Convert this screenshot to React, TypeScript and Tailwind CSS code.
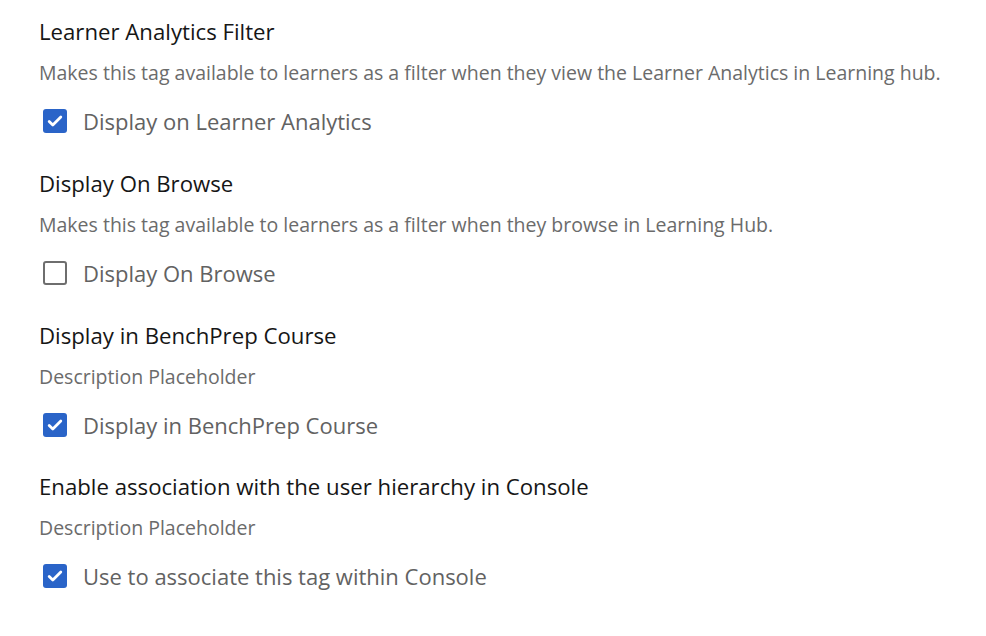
import React, { useState } from 'react';

interface Setting {
  title: string;
  description: string;
  label: string;
  checked: boolean;
}

const settings: Setting[] = [
  {
    title: 'Learner Analytics Filter',
    description:
      'Makes this tag available to learners as a filter when they view the Learner Analytics in Learning hub.',
    label: 'Display on Learner Analytics',
    checked: true,
  },
  {
    title: 'Display On Browse',
    description: 'Makes this tag available to learners as a filter when they browse in Learning Hub.',
    label: 'Display On Browse',
    checked: false,
  },
  {
    title: 'Display in BenchPrep Course',
    description: 'Description Placeholder',
    label: 'Display in BenchPrep Course',
    checked: true,
  },
  {
    title: 'Enable association with the user hierarchy in Console',
    description: 'Description Placeholder',
    label: 'Use to associate this tag within Console',
    checked: true,
  },
];

const Checkbox: React.FC<{ checked: boolean; onToggle: () => void }> = ({ checked, onToggle }) => (
  <button
    type="button"
    onClick={onToggle}
    className={`w-[24px] h-[24px] rounded-[3px] flex items-center justify-center shrink-0 ${
      checked ? 'bg-[#2a64c8]' : 'bg-white border-[2.5px] border-[#6e6e6e]'
    }`}
  >
    {checked && (
      <svg width="18" height="18" viewBox="0 0 18 18" fill="none">
        <path d="M3.2 9.4l3.6 3.5L14.8 5" stroke="white" strokeWidth="2.8" strokeLinecap="round" strokeLinejoin="round" />
      </svg>
    )}
  </button>
);

const SettingRow: React.FC<{ setting: Setting }> = ({ setting }) => {
  const [checked, setChecked] = useState(setting.checked);
  return (
    <div className="flex flex-col">
      <h3 className="h-[28px] leading-[28px] text-[22.2px] text-[#161616]">{setting.title}</h3>
      <p className="mt-[15px] h-[24px] leading-[24px] text-[19.5px] text-[#6b6b6b]">{setting.description}</p>
      <label className="mt-[20px] h-[32px] flex items-center gap-[16px] pl-[4px] cursor-pointer">
        <Checkbox checked={checked} onToggle={() => setChecked(!checked)} />
        <span className="text-[22px] text-[#626262] leading-[32px]">{setting.label}</span>
      </label>
    </div>
  );
};

export default function App() {
  return (
    <div className="w-[986px] h-[636px] bg-white pl-[39px] pt-[18px] flex flex-col gap-[32.75px] font-['Open_Sans',sans-serif]">
      {settings.map((s) => (
        <SettingRow key={s.title} setting={s} />
      ))}
    </div>
  );
}
